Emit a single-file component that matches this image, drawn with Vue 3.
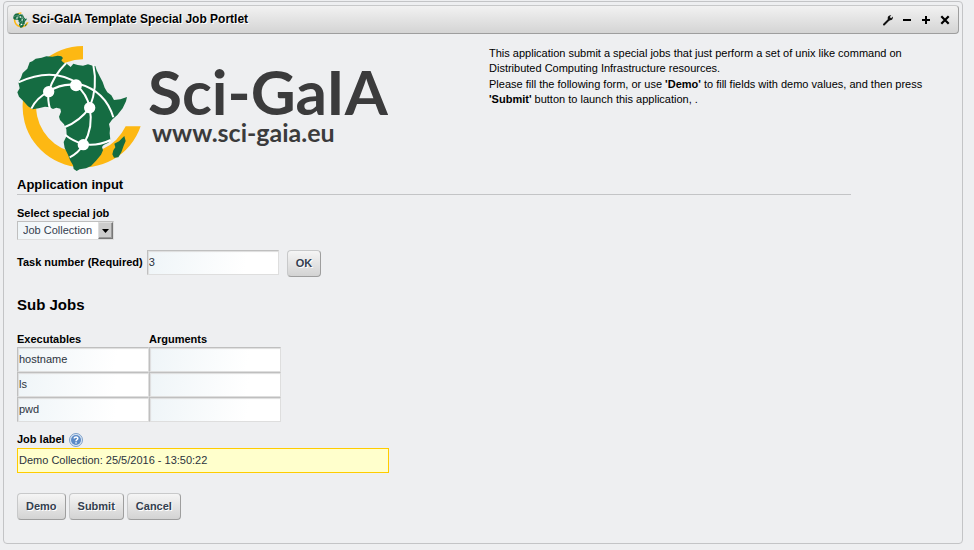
<script setup>
import { reactive, ref } from 'vue'

const jobType = ref('Job Collection')
const taskNumber = ref('3')
const jobs = reactive([
  { executable: 'hostname', args: '' },
  { executable: 'ls', args: '' },
  { executable: 'pwd', args: '' }
])
const jobLabel = ref('Demo Collection: 25/5/2016 - 13:50:22')
</script>

<template>
  <section class="portlet">
    <svg class="defs" aria-hidden="true">
      <symbol id="africa" viewBox="20 15 378 381">
        <path fill="#fdb813" d="M218 18V58A141 141 0 1 0 346 259H391A182 182 0 1 1 218 18Z" />
        <path fill="#156c42" d="M58 67L66 64 76 56 94 53 108 49 126 50 142 47 153 49 158 54 153 61 158 67 170 72 181 81 189 71 202 75 218 77 233 73 247 77 255 78 259 91 268 109 277 126 283 143 291 157 303 166 311 180 330 178 350 171 347 184 337 205 321 225 305 239 296 252 299 266 298 280 300 299 294 308 280 315 275 321 278 331 272 344 257 362 242 378 227 385 208 388 199 393 190 387 188 376 180 362 173 344 163 324 160 306 169 287 168 268 161 253 149 240 146 230 152 215 150 206 138 203 128 207 118 202 104 200 85 205 67 208 53 199 39 183 26 170 21 157 28 145 24 127 32 113 37 99 51 86Z" />
        <path fill="#156c42" d="M342 288L346 303 340 317 333 337 324 352 311 353 306 343 309 331 315 322 312 311 326 304 335 295Z" />
        <g fill="none" stroke="#fff" stroke-width="6">
          <path d="M24 127C92 95 153 97 204 131C261 146 293 178 309 232" />
          <path d="M63 206Q78 174 115 155Q153 129 197 135Q230 161 238 203Q250 262 220 313Q204 340 178 352" />
          <path d="M115 155Q130 106 167 70M115 155Q111 180 119 207" />
          <path d="M249 75Q263 141 238 203Q208 244 164 261M164 284Q188 303 220 313Q262 319 301 300" />
        </g>
        <g fill="#fff">
          <circle cx="115" cy="155" r="17" /><circle cx="197" cy="136" r="18" />
          <circle cx="238" cy="203" r="17" /><circle cx="219" cy="314" r="17" />
        </g>
      </symbol>
    </svg>

    <header class="topper">
      <svg class="mini" aria-hidden="true"><use href="#africa" /></svg>
      <h1>Sci-GaIA Template Special Job Portlet</h1>
      <nav class="tools">
        <button type="button" aria-label="Configuration">
          <svg viewBox="0 0 12 12"><path d="M2 10.5L7 5.5" stroke="#111" stroke-width="2" stroke-linecap="round" /><path d="M9.3 1.2 7.8 2.9 9.1 4.2 10.9 2.6C11.2 4.8 10 6.4 8 6.3 6.2 6.3 5.5 5.2 5.7 3.8 5.9 2.1 7.3.9 9.3 1.2Z" fill="#111" /></svg>
        </button>
        <button type="button" aria-label="Minimize">
          <svg viewBox="0 0 12 12"><path d="M2 6H10" stroke="#000" stroke-width="2" /></svg>
        </button>
        <button type="button" aria-label="Maximize">
          <svg viewBox="0 0 12 12"><path d="M2 6H10M6 2V10" stroke="#000" stroke-width="2" /></svg>
        </button>
        <button type="button" aria-label="Close">
          <svg viewBox="0 0 12 12"><path d="M2.3 2.3 9.7 9.7M9.7 2.3 2.3 9.7" stroke="#000" stroke-width="2.2" /></svg>
        </button>
      </nav>
    </header>

    <div class="body">
      <div class="intro">
        <div class="brand">
          <svg class="logo" aria-hidden="true"><use href="#africa" /></svg>
          <div class="words">
            <span class="name">Sci-GaIA</span>
            <span class="url">www.sci-gaia.eu</span>
          </div>
        </div>
        <div class="about">
          <p>This application submit a special jobs that just perform a set of unix like command on Distributed Computing Infrastructure resources.</p>
          <p>Please fill the following form, or use <b>'Demo'</b> to fill fields with demo values, and then press <b>'Submit'</b> button to launch this application, .</p>
        </div>
      </div>

      <form @submit.prevent>
        <h2>Application input</h2>
        <div class="job">
          <label for="job-type">Select special job</label>
          <div class="picker">
            <select id="job-type" v-model="jobType">
              <option>Job Collection</option>
            </select>
            <span class="arrow"><svg viewBox="0 0 7 4"><path d="M0 0H7L3.5 4Z" /></svg></span>
          </div>
        </div>
        <div class="task">
          <label for="tasks">Task number (Required)</label>
          <input id="tasks" v-model="taskNumber" class="field" type="text" />
          <button type="button" class="btn">OK</button>
        </div>

        <h3>Sub Jobs</h3>
        <table>
          <thead>
            <tr><th scope="col">Executables</th><th scope="col">Arguments</th></tr>
          </thead>
          <tbody>
            <tr v-for="(job, i) in jobs" :key="i">
              <td><input v-model="job.executable" class="field" type="text" :aria-label="`Executable ${i + 1}`" /></td>
              <td><input v-model="job.args" class="field" type="text" :aria-label="`Arguments ${i + 1}`" /></td>
            </tr>
          </tbody>
        </table>

        <div class="caption">
          <label for="job-label">Job label</label>
          <svg class="help" viewBox="0 0 14 14" aria-hidden="true">
            <circle cx="7" cy="7" r="6.5" fill="#dce8f5" stroke="#7d9fc9" />
            <circle cx="7" cy="7" r="5" fill="#5b8ac6" />
            <path d="M5.2 5.6C5.2 3.3 8.9 3.4 8.8 5.5 8.7 6.7 7 6.8 7 8.2M7 9.2V10.6" fill="none" stroke="#fff" stroke-width="1.5" />
          </svg>
        </div>
        <input id="job-label" v-model="jobLabel" class="field focused" type="text" />

        <div class="actions">
          <button type="button" class="btn">Demo</button>
          <button type="submit" class="btn">Submit</button>
          <button type="reset" class="btn">Cancel</button>
        </div>
      </form>
    </div>
  </section>
</template>

<style>
body {
  background: #eeeff1;
}
</style>

<style scoped>
.portlet,
.portlet * {
  box-sizing: border-box;
}
.portlet {
  margin: 1px 11px 0 3px;
  padding: 3px;
  border: 1px solid #c3c4c6;
  border-radius: 4px;
  color: #000;
  font: 11px/15px "Liberation Sans", Arial, sans-serif;
}
.defs {
  display: none;
}
h1,
h2,
h3,
p {
  margin: 0;
}
.topper {
  display: flex;
  align-items: center;
  height: 29px;
  padding: 0 7px 0 5px;
  border: 1px solid;
  border-color: #c8c9ca #9e9e9e #9e9e9e #c8c9ca;
  border-radius: 4px;
  background: linear-gradient(#f2f2f2, #d4d4d4);
}
.mini {
  width: 16px;
  height: 16px;
  margin-right: 3px;
}
h1 {
  flex: 1;
  padding-bottom: 2px;
  font-size: 12px;
  line-height: 16px;
  text-shadow: 1px 1px #fff;
}
.tools {
  display: flex;
  gap: 7px;
}
.tools button {
  width: 12px;
  height: 12px;
  padding: 0;
  border: 0;
  background: none;
}
.tools svg {
  display: block;
  width: 12px;
  height: 12px;
}
.body {
  padding: 11px 0 20px 10px;
}
.intro {
  display: grid;
  grid-template-columns: 1fr 1fr;
}
.brand {
  display: flex;
  gap: 5px;
}
.logo {
  width: 126px;
  height: 127px;
}
.words {
  display: flex;
  flex-direction: column;
  padding-top: 14px;
  color: #3b3b3c;
  font-family: Lato, sans-serif;
  font-weight: 700;
  white-space: nowrap;
}
.name {
  font-size: 62px;
  line-height: 64px;
}
.url {
  padding-left: 4px;
  font-size: 25px;
  line-height: 18px;
}
.about {
  display: flex;
  flex-direction: column;
  gap: 1px;
  padding: 1px 24px 0 1px;
}
h2 {
  max-width: 834px;
  padding: 5px 0 1px;
  border-bottom: 1px solid #c3c4c6;
  font-size: 13px;
  line-height: 16px;
}
label,
th {
  font-weight: 700;
}
.job {
  padding-top: 11px;
}
.job label {
  display: block;
}
.picker {
  position: relative;
  width: max-content;
}
select {
  display: block;
  width: 97px;
  height: 19px;
  padding: 0 18px 0 5px;
  appearance: none;
  border: 1px solid #dedede;
  border-top-color: #bfbfbf;
  border-left-color: #bfbfbf;
  border-radius: 0;
  background: linear-gradient(100deg, #eff5f8, #fff 80%);
  color: #34404f;
  font: inherit;
}
.arrow {
  position: absolute;
  top: 1px;
  right: 1px;
  display: grid;
  place-items: center;
  width: 15px;
  height: 17px;
  border: 1px solid;
  border-color: #dedede #777 #777 #dedede;
  box-shadow: inset -1px -1px #999;
  background: #ccc;
  pointer-events: none;
}
.arrow svg {
  width: 7px;
  height: 4px;
}
.task {
  display: flex;
  align-items: flex-start;
  margin-top: 10px;
}
.task label {
  line-height: 25px;
}
.field {
  display: block;
  width: 132px;
  height: 25px;
  padding: 0 1px 2px;
  border: 1px solid #dedede;
  border-top-color: #bfbfbf;
  border-left-color: #bfbfbf;
  border-radius: 0;
  outline: 0;
  box-shadow: inset 1px 1px 1px #ddd;
  background: linear-gradient(100deg, #eff5f8, #fff 75%);
  color: #2b333d;
  font: inherit;
}
.task .field {
  margin: 0 8px 0 4px;
}
.btn {
  height: 27px;
  padding: 0 8px;
  border: 1px solid;
  border-color: #c8c9ca #9e9e9e #9e9e9e #c8c9ca;
  border-radius: 4px;
  background: linear-gradient(#f5f5f5, #d3d3d3);
  color: #34404f;
  font: inherit;
  font-weight: 700;
  text-shadow: 1px 1px #fff;
}
h3 {
  padding: 19px 0 17px;
  font-size: 15px;
  line-height: 18px;
}
table {
  border-spacing: 0;
}
th,
td {
  padding: 0;
  text-align: left;
}
th {
  height: 16px;
}
.caption {
  display: flex;
  align-items: center;
  gap: 4px;
  padding: 10px 0 1px;
}
.help {
  width: 14px;
  height: 14px;
}
.focused {
  width: 372px;
  border-color: #fc0;
  box-shadow: none;
  background: #ffc;
}
.actions {
  display: flex;
  gap: 3px;
  margin-top: 20px;
}
</style>
